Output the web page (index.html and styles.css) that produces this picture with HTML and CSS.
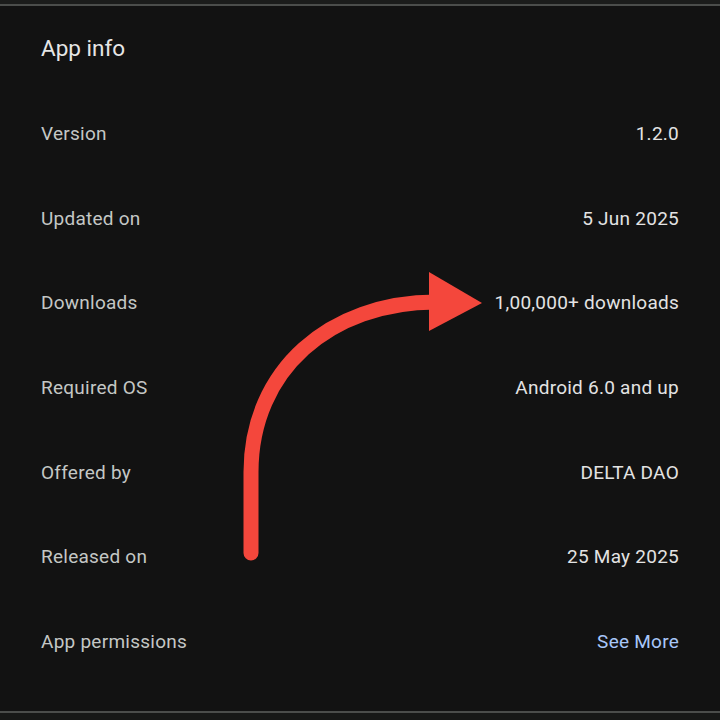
FILE: index.html
```html
<!DOCTYPE html>
<html>
  <head>
    <meta charset="utf-8">
    <link rel="stylesheet" href="styles.css">
  </head>
  <body>
    <div id="topbar"></div>
    <div id="sheet">
      <h1 class="title">App info</h1>
      <dl class="info">
        <div class="row"><dt>Version</dt><dd>1.2.0</dd></div>
        <div class="row"><dt>Updated on</dt><dd>5 Jun 2025</dd></div>
        <div class="row"><dt>Downloads</dt><dd>1,00,000+ downloads</dd></div>
        <div class="row"><dt>Required OS</dt><dd>Android 6.0 and up</dd></div>
        <div class="row"><dt>Offered by</dt><dd>DELTA DAO</dd></div>
        <div class="row"><dt>Released on</dt><dd>25 May 2025</dd></div>
        <div class="row"><dt>App permissions</dt><dd><a href="#" class="more">See More</a></dd></div>
      </dl>
      <!-- red callout arrow pointing at the downloads count -->
      <svg class="callout" width="720" height="720" viewBox="0 0 720 720">
        <path d="M 251,553 L 251,472 C 251,370 330,302 436,302"
          style="fill:none;stroke:#f4473c;stroke-width:15px;stroke-linecap:round;"
        />
        <polygon points="429,272 482,303 429,331" style="fill:#f4473c;" />
      </svg>
    </div>
    <div id="bottombar"></div>
  </body>
</html>
```

FILE: styles.css
```css
body {
  margin: 0;
  width: 720px;
  height: 720px;
  background: #121212;
  font-family: Roboto, "Liberation Sans", sans-serif;
  overflow: hidden;
  display: flex;
  flex-direction: column;
}

#topbar {
  height: 4px;
  background: #1b1c1b;
  border-bottom: 2px solid #4b4d4b;
  flex: none;
}

#sheet {
  position: relative;
  flex: 1;
  padding: 0 41px;
}

#bottombar {
  height: 7px;
  background: #171817;
  border-top: 2px solid #4b4d4b;
  flex: none;
}

.title {
  margin: 0;
  height: 85px;
  display: flex;
  align-items: center;
  font-size: 22.5px;
  font-weight: 400;
  color: #e6e6e6;
  padding-bottom: 2px;
  box-sizing: border-box;
}

.info {
  margin: 0;
}

.row {
  height: 84.7px;
  display: flex;
  align-items: center;
  justify-content: space-between;
  font-size: 19px;
  letter-spacing: 0.25px;
}

.row dt {
  color: #c4c7c5;
}

.row dd {
  margin: 0;
  color: #e3e3e3;
}

.more {
  color: #a8c7fa;
  text-decoration: none;
}

.callout {
  position: absolute;
  left: 0;
  top: -6px;
  pointer-events: none;
}
```
